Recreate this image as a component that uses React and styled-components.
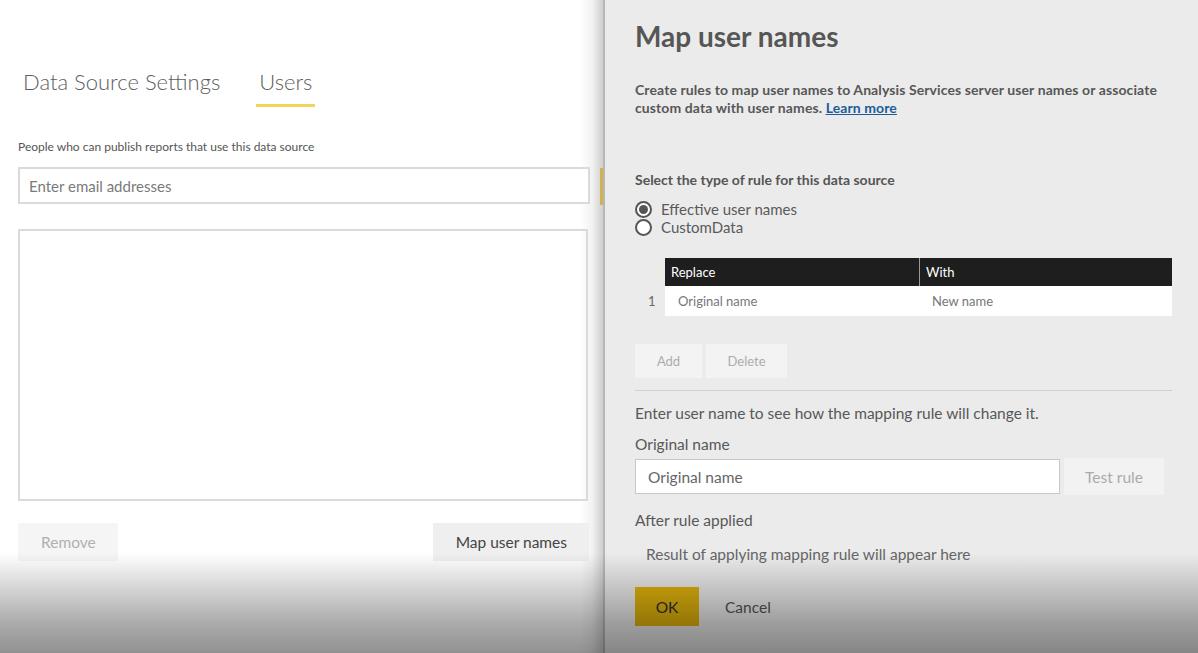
import React from "react";
import styled, { createGlobalStyle } from "styled-components";

const GlobalStyle = createGlobalStyle`
  html, body {
    margin: 0;
    padding: 0;
    background: #ffffff;
  }
  body {
    font-family: Lato, "Open Sans", sans-serif;
  }
  * {
    box-sizing: border-box;
  }
`;

const App = () => {
  return (
    <Page>
      <GlobalStyle />
      <LeftPanel>
        <Tabs>
          <Tab>Data Source Settings</Tab>
          <Tab active>Users</Tab>
        </Tabs>
        <Hint>People who can publish reports that use this data source</Hint>
        <EmailInput placeholder="Enter email addresses" />
        <UserList />
        <ButtonRow>
          <GrayButton disabled>Remove</GrayButton>
          <GrayButton>Map user names</GrayButton>
        </ButtonRow>
      </LeftPanel>
      <EdgeMark />
      <RightPanel>
        <Heading>Map user names</Heading>
        <Description>
          Create rules to map user names to Analysis Services server user names
          or associate custom data with user names. <LearnMore>Learn more</LearnMore>
        </Description>
        <SectionTitle>Select the type of rule for this data source</SectionTitle>
        <RadioGroup>
          <RadioRow>
            <Radio checked />
            <RadioLabel>Effective user names</RadioLabel>
          </RadioRow>
          <RadioRow>
            <Radio />
            <RadioLabel>CustomData</RadioLabel>
          </RadioRow>
        </RadioGroup>
        <RuleTable>
          <span />
          <HeadCell>Replace</HeadCell>
          <HeadCell divider>With</HeadCell>
          <RowNumber>1</RowNumber>
          <BodyCell>Original name</BodyCell>
          <BodyCell>New name</BodyCell>
        </RuleTable>
        <SmallButtons>
          <SmallButton width="67px">Add</SmallButton>
          <SmallButton width="81px">Delete</SmallButton>
        </SmallButtons>
        <Divider />
        <BodyText>Enter user name to see how the mapping rule will change it.</BodyText>
        <FieldLabel gap="13px">Original name</FieldLabel>
        <TestRow>
          <NameInput placeholder="Original name" />
          <TestButton>Test rule</TestButton>
        </TestRow>
        <FieldLabel gap="16px">After rule applied</FieldLabel>
        <ResultText>Result of applying mapping rule will appear here</ResultText>
        <FooterRow>
          <OkButton>OK</OkButton>
          <CancelButton>Cancel</CancelButton>
        </FooterRow>
      </RightPanel>
      <Vignette />
    </Page>
  );
};

export default App;

const Page = styled.div`
  position: relative;
  width: 1198px;
  height: 653px;
  display: flex;
  flex-direction: row;
  overflow: hidden;
  background: #ffffff;
`;

const LeftPanel = styled.div`
  width: 603px;
  flex: none;
  display: flex;
  flex-direction: column;
  padding: 67px 13px 0 18px;
  background: linear-gradient(to right, #ffffff 0, #ffffff 580px, #f2f2f2 592px, #cfcfcf 603px);
`;

const Tabs = styled.div`
  display: flex;
  flex-direction: row;
  gap: 33px;
  padding-left: 2px;
`;

const Tab = styled.div`
  font-size: 22px;
  font-weight: 300;
  color: #5e5e5e;
  line-height: 30px;
  padding: 0 3px 7px 3px;
  border-bottom: 3px solid ${(p) => (p.active ? "#f2d35c" : "transparent")};
`;

const Hint = styled.div`
  font-size: 12px;
  color: #555555;
  margin: 32px 0 13px 0;
`;

const EmailInput = styled.input`
  width: 572px;
  height: 37px;
  border: 2px solid #dadada;
  padding: 0 9px;
  font-family: inherit;
  font-size: 15px;
  color: #444;
  outline: none;
  &::placeholder {
    color: #7a7a7a;
  }
`;

const UserList = styled.div`
  width: 570px;
  height: 272px;
  margin-top: 25px;
  border: 2px solid #dadada;
`;

const ButtonRow = styled.div`
  width: 571px;
  display: flex;
  flex-direction: row;
  justify-content: space-between;
  margin-top: 22px;
`;

const GrayButton = styled.button`
  height: 38px;
  border: none;
  padding: 0 22px 0 23px;
  font-family: inherit;
  font-size: 15.5px;
  background: ${(p) => (p.disabled ? "#f5f5f5" : "#efefef")};
  color: ${(p) => (p.disabled ? "#b0b0b0" : "#444444")};
`;

const EdgeMark = styled.div`
  position: absolute;
  left: 600px;
  top: 168px;
  width: 4px;
  height: 37px;
  background: #d2b24a;
`;

const RightPanel = styled.div`
  flex: 1;
  position: relative;
  z-index: 1;
  display: flex;
  flex-direction: column;
  padding: 19px 26px 0 30px;
  background: #ebebeb;
  border-left: 2px solid #b7b7b7;
  color: #555555;
`;

const Heading = styled.h1`
  margin: 0;
  font-size: 28px;
  font-weight: 700;
  line-height: 34px;
  color: #565656;
`;

const Description = styled.p`
  margin: 28px 0 0 0;
  max-width: 530px;
  font-size: 14px;
  font-weight: 700;
  letter-spacing: 0.1px;
  line-height: 18px;
  color: #575757;
`;

const LearnMore = styled.a`
  color: #1c5d99;
  text-decoration: underline;
`;

const SectionTitle = styled.div`
  margin-top: 54px;
  font-size: 14px;
  font-weight: 700;
  color: #555555;
`;

const RadioGroup = styled.div`
  display: flex;
  flex-direction: column;
  margin-top: 12px;
`;

const RadioRow = styled.div`
  display: flex;
  flex-direction: row;
  align-items: center;
  gap: 9px;
  height: 18px;
`;

const Radio = styled.span`
  width: 17px;
  height: 17px;
  border-radius: 50%;
  border: 2px solid #555555;
  background: #ffffff;
  display: flex;
  align-items: center;
  justify-content: center;
  &::after {
    content: "";
    width: 9px;
    height: 9px;
    border-radius: 50%;
    background: ${(p) => (p.checked ? "#555555" : "transparent")};
  }
`;

const RadioLabel = styled.span`
  font-size: 15px;
  color: #5a5a5a;
`;

const RuleTable = styled.div`
  display: grid;
  grid-template-columns: 30px 254px 1fr;
  grid-template-rows: 28px 30px;
  margin-top: 22px;
`;

const HeadCell = styled.div`
  background: #1e1e1e;
  color: #ffffff;
  font-size: 13px;
  display: flex;
  align-items: center;
  padding-left: 6px;
  border-left: ${(p) => (p.divider ? "1px solid #9a9a9a" : "none")};
`;

const RowNumber = styled.div`
  font-size: 13px;
  color: #666666;
  display: flex;
  align-items: center;
  padding-left: 13px;
`;

const BodyCell = styled.div`
  background: #ffffff;
  font-size: 13px;
  color: #777777;
  display: flex;
  align-items: center;
  padding-left: 13px;
`;

const SmallButtons = styled.div`
  display: flex;
  flex-direction: row;
  gap: 4px;
  margin-top: 28px;
`;

const SmallButton = styled.button`
  width: ${(p) => p.width};
  height: 34px;
  border: none;
  background: #f3f3f3;
  color: #adadad;
  font-family: inherit;
  font-size: 13px;
`;

const Divider = styled.div`
  height: 1px;
  background: #cfcfcf;
  margin: 12px 0 0 0;
`;

const BodyText = styled.div`
  margin-top: 13px;
  font-size: 15.5px;
  color: #585858;
`;

const FieldLabel = styled.div`
  margin-top: ${(p) => p.gap || "12px"};
  font-size: 15.5px;
  color: #585858;
`;

const TestRow = styled.div`
  display: flex;
  flex-direction: row;
  align-items: center;
  gap: 4px;
  margin-top: 5px;
`;

const NameInput = styled.input`
  width: 425px;
  height: 35px;
  border: 1px solid #c8c8c8;
  background: #ffffff;
  padding: 0 12px;
  font-family: inherit;
  font-size: 15.5px;
  outline: none;
  &::placeholder {
    color: #666666;
  }
`;

const TestButton = styled.button`
  width: 100px;
  height: 37px;
  border: none;
  background: #f2f2f2;
  color: #aaaaaa;
  font-family: inherit;
  font-size: 15.5px;
`;

const ResultText = styled.div`
  margin-top: 16px;
  padding-left: 11px;
  font-size: 15.5px;
  color: #666666;
`;

const FooterRow = styled.div`
  display: flex;
  flex-direction: row;
  align-items: center;
  gap: 26px;
  margin-top: 24px;
`;

const OkButton = styled.button`
  width: 64px;
  height: 39px;
  border: none;
  background: #e0b20c;
  color: #2e2e2e;
  font-family: inherit;
  font-size: 15.5px;
`;

const CancelButton = styled.button`
  border: none;
  background: transparent;
  padding: 0;
  color: #555555;
  font-family: inherit;
  font-size: 15.5px;
`;

const Vignette = styled.div`
  position: absolute;
  left: 0;
  right: 0;
  bottom: 0;
  height: 100px;
  z-index: 2;
  pointer-events: none;
  background: linear-gradient(to bottom, rgba(0, 0, 0, 0) 0%, rgba(0, 0, 0, 0.14) 30%, rgba(0, 0, 0, 0.33) 70%, rgba(0, 0, 0, 0.43) 100%);
`;
